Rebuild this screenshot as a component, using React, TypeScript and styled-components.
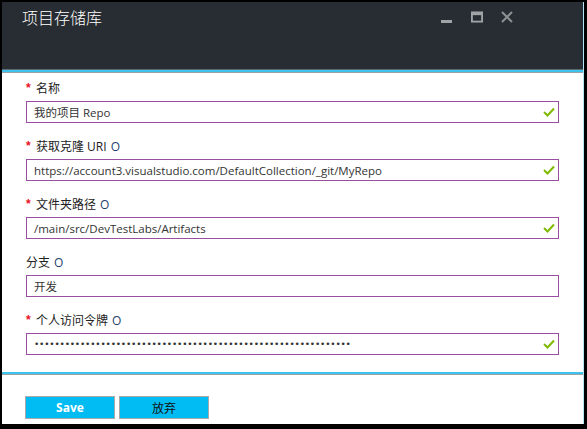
import React from "react";
import styled, { createGlobalStyle } from "styled-components";

const Global = createGlobalStyle`
  html, body { margin: 0; padding: 0; background: #000; }
  body { font-family: "Segoe UI", "Open Sans", "Noto Sans CJK SC", sans-serif; }
`;

const Frame = styled.div`
  width: 587px;
  height: 429px;
  box-sizing: border-box;
  background: #000;
  padding: 2px 3px 5px 2px;
  display: flex;
`;

const Blade = styled.div`
  flex: 1;
  display: flex;
  flex-direction: column;
  background: #fff;
  border-right: 1px solid #b3e3f4;
`;

const Header = styled.div`
  height: 68px;
  background: #272d32;
  display: flex;
  align-items: flex-start;
  justify-content: space-between;
  padding: 4px 0 0 20px;
  box-sizing: border-box;
  border-bottom: 1px solid #5d6a70;
`;

const Title = styled.div`
  color: #fff;
  font-family: "Noto Sans CJK SC", sans-serif;
  font-size: 16px;
  font-weight: 300;
  line-height: 22px;
`;

const Controls = styled.div`
  display: flex;
  gap: 18px;
  padding: 5px 70px 0 0;
`;

const CtrlBtn = styled.div`
  width: 12px;
  height: 12px;
  display: flex;
`;

const Rule = styled.div`
  height: 2px;
  background: #3ec3ec;
  border-bottom: 1px solid #9aa3a8;
`;

const Form = styled.div`
  padding: 7px 24px 0 24px;
  display: flex;
  flex-direction: column;
  gap: 15px;
  height: 299px;
  box-sizing: border-box;
`;

const Field = styled.div`
  display: flex;
  flex-direction: column;
  gap: 5px;
`;

const Label = styled.div`
  display: flex;
  align-items: center;
  height: 16px;
  font-size: 12px;
  color: #222;
  font-family: "Open Sans", "Noto Sans CJK SC", sans-serif;
`;

const Star = styled.span`
  color: #e81123;
  font-size: 12px;
  font-weight: 700;
  width: 10px;
  font-family: "Liberation Sans", sans-serif;
`;

const Info = styled.span`
  color: #1f3f6e;
  margin-left: 4px;
`;

const Box = styled.div`
  height: 22px;
  box-sizing: border-box;
  border: 1px solid #9a4e9f;
  display: flex;
  align-items: center;
  justify-content: space-between;
  padding: 0 3px 0 7px;
  font-size: 11.5px;
  color: #333;
  font-family: "Open Sans", "Noto Sans CJK SC", sans-serif;
`;

const Dots = styled.span`
  font-size: 9px;
  letter-spacing: -0.2px;
  color: #333;
  font-family: "DejaVu Sans", sans-serif;
`;

const Footer = styled.div`
  flex: 1;
  display: flex;
  gap: 4px;
  padding: 21px 0 0 23px;
  align-items: flex-start;
`;

const Button = styled.button<{ $primary?: boolean }>`
  width: 90px;
  height: 23px;
  border: 1px solid #a9a9a9;
  background: #00bcf2;
  color: ${(p) => (p.$primary ? "#fff" : "#111")};
  font-weight: ${(p) => (p.$primary ? 700 : 400)};
  font-size: 12px;
  font-family: "Open Sans", "Noto Sans CJK SC", sans-serif;
  padding: 0;
`;

const Check = () => (
  <svg width="12" height="10" viewBox="0 0 12 10">
    <path d="M1 5 L4.5 8.5 L11 1.5" fill="none" stroke="#7fba00" strokeWidth="2" />
  </svg>
);

const fields = [
  { label: "名称", req: true, info: false, value: "我的项目 Repo", check: true },
  { label: "获取克隆 URI", req: true, info: true, value: "https://account3.visualstudio.com/DefaultCollection/_git/MyRepo", check: true },
  { label: "文件夹路径", req: true, info: true, value: "/main/src/DevTestLabs/Artifacts", check: true },
  { label: "分支", req: false, info: true, value: "开发", check: false },
  { label: "个人访问令牌", req: true, info: true, value: "", check: true, password: true },
];

export default function App() {
  return (
    <>
      <Global />
      <Frame>
        <Blade>
          <Header>
            <Title>项目存储库</Title>
            <Controls>
              <CtrlBtn>
                <svg width="12" height="12" viewBox="0 0 12 12">
                  <rect x="0" y="9" width="11" height="3" fill="#a0a4a7" />
                </svg>
              </CtrlBtn>
              <CtrlBtn>
                <svg width="13" height="12" viewBox="0 0 13 12">
                  <rect x="1" y="1" width="11" height="10" fill="none" stroke="#a0a4a7" strokeWidth="2" />
                  <rect x="1" y="1" width="11" height="3" fill="#a0a4a7" />
                </svg>
              </CtrlBtn>
              <CtrlBtn>
                <svg width="12" height="12" viewBox="0 0 12 12">
                  <path d="M1 1 L11 11 M11 1 L1 11" stroke="#8c9194" strokeWidth="2" />
                </svg>
              </CtrlBtn>
            </Controls>
          </Header>
          <Rule />
          <Form>
            {fields.map((f) => (
              <Field key={f.label}>
                <Label>
                  {f.req && <Star>*</Star>}
                  {f.label}
                  {f.info && <Info>O</Info>}
                </Label>
                <Box>
                  {f.password ? <Dots>{"•".repeat(62)}</Dots> : <span>{f.value}</span>}
                  {f.check && <Check />}
                </Box>
              </Field>
            ))}
          </Form>
          <Rule />
          <Footer>
            <Button $primary>Save</Button>
            <Button>放弃</Button>
          </Footer>
        </Blade>
      </Frame>
    </>
  );
}
